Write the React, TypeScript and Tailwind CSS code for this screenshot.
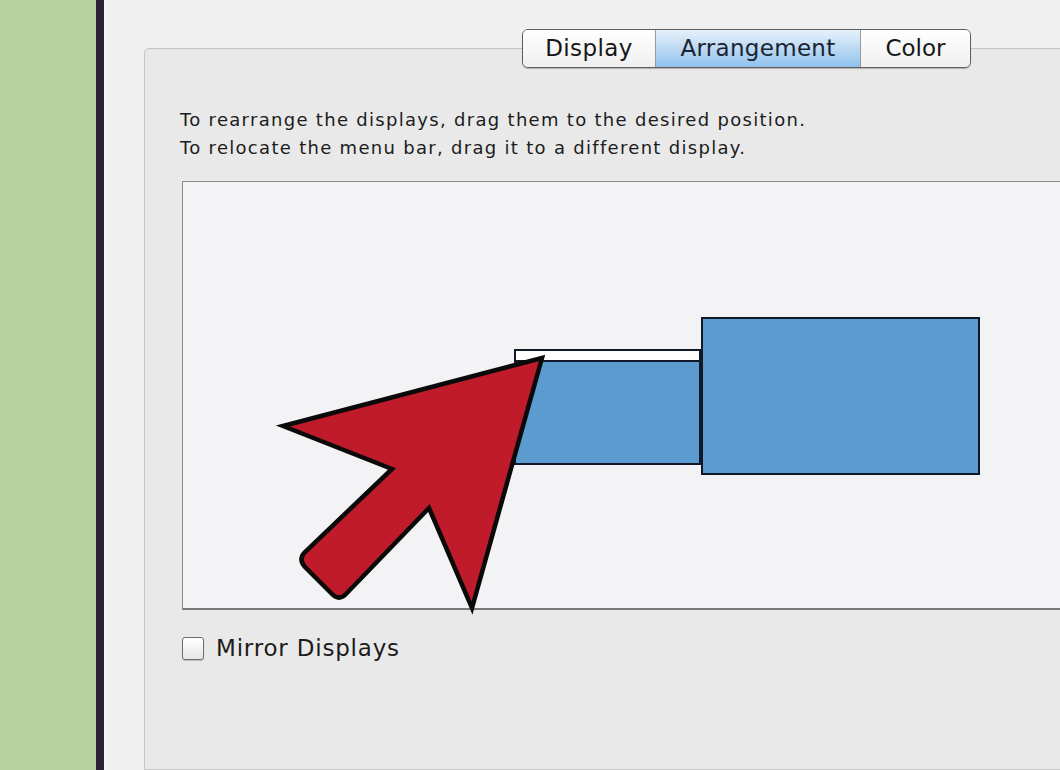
export default function App() {
  return (
    <div
      className="flex w-[1060px] h-[770px] overflow-hidden bg-[#f0f0f0] text-[#1c1c1c]"
      style={{ fontFamily: '"DejaVu Sans", "Liberation Sans", sans-serif' }}
    >
      {/* desktop strip */}
      <div className="w-[96px] shrink-0 bg-[#b7d1a0]" />
      <div className="w-[8px] shrink-0 bg-[#2b2236]" />

      {/* preference pane */}
      <div className="flex-1 flex flex-col pl-[38px] pt-[29px] bg-[#f0f0f0] border-l-2 border-[#f7f4f6]">
        {/* segmented tabs */}
        <div className="relative z-10 flex pl-[378px]">
          <div className="flex h-[39px] rounded-[6px] border border-[#5f5f5f] overflow-hidden shadow-[0_1px_1px_rgba(0,0,0,0.25)] text-[23px] leading-none text-[#161616]">
            <div className="w-[133px] flex items-center justify-center bg-gradient-to-b from-white to-[#efefef] border-r border-[#9a9a9a] tracking-[0.4px]">
              Display
            </div>
            <div className="w-[205px] flex items-center justify-center bg-gradient-to-b from-[#e6f1fb] via-[#bcd9f3] to-[#8fc1ec] border-r border-[#9a9a9a] text-[#1b2433] tracking-[0.3px]">
              Arrangement
            </div>
            <div className="w-[109px] flex items-center justify-center bg-gradient-to-b from-white to-[#efefef]">
              Color
            </div>
          </div>
        </div>

        {/* group box */}
        <div className="-mt-[20px] w-[1000px] flex-1 rounded-tl-[5px] border border-[#c4c4c4] bg-[#e9e9e9] pt-[57px] pl-[37px]">
          <div className="-ml-[2px] text-[18px] leading-[28px] tracking-[1.3px]">
            <p>To rearrange the displays, drag them to the desired position.</p>
            <p>To relocate the menu bar, drag it to a different display.</p>
          </div>

          {/* arrangement canvas */}
          <div className="relative mt-[19px] h-[429px] w-[920px] border border-[#8a8a8a] border-b-2 border-b-[#7a7a7a] bg-[#f3f3f5]">
            {/* small display with menu bar */}
            <div className="absolute left-[331px] top-[167px] w-[187px] h-[116px] flex flex-col border-2 border-[#111827] bg-[#5c9bd0]">
              <div className="h-[11px] bg-white border-b-2 border-[#111827]" />
            </div>
            {/* large display */}
            <div className="absolute left-[518px] top-[135px] w-[279px] h-[158px] border-2 border-[#111827] bg-[#5c9bd0]" />

            {/* red pointer arrow */}
            <svg
              className="absolute left-0 top-0 overflow-visible"
              width="900"
              height="430"
              viewBox="0 0 900 430"
            >
              <g transform="translate(-183,-181)">
                <path
                  d="M542,357 L283,425 L392,468 L305,551 Q298,558 305,566 L332,593 Q339,600 346,593 L429,507 L472,607 Z"
                  fill="#c01b2b"
                  stroke="#0a0a0a"
                  strokeWidth="4.5"
                  strokeLinejoin="miter"
                  strokeMiterlimit="12"
                />
              </g>
            </svg>
          </div>

          {/* mirror checkbox */}
          <label className="mt-[27px] flex items-center gap-[12px] text-[23px] leading-none">
            <span className="w-[22px] h-[23px] rounded-[3px] border border-[#6d6d6d] bg-gradient-to-b from-white to-[#e6e6e6] shadow-[0_1px_1px_rgba(0,0,0,0.2)]" />
            <span className="tracking-[0.8px]">Mirror Displays</span>
          </label>
        </div>
      </div>
    </div>
  );
}
